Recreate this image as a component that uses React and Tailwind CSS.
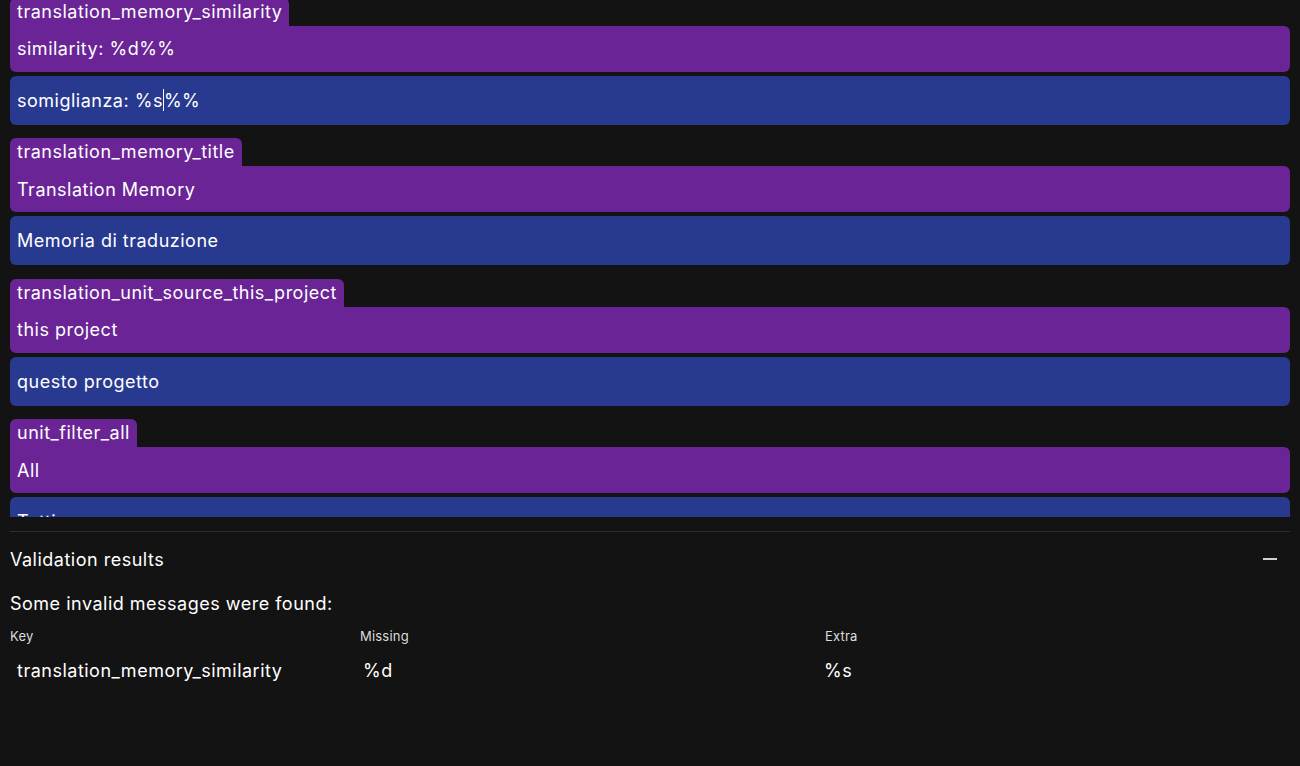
import React from "react";

const entries = [
  { key: "translation_memory_similarity", source: "similarity: %d%%", target: "somiglianza: %s", caret: "%%" },
  { key: "translation_memory_title", source: "Translation Memory", target: "Memoria di traduzione" },
  { key: "translation_unit_source_this_project", source: "this project", target: "questo progetto" },
  { key: "unit_filter_all", source: "All", target: "Tutti" },
];

const Entry = ({ item }) => (
  <div className="flex flex-col">
    <div className="self-start h-[28px] rounded-t-md bg-[#6a2496] px-[7px] leading-[28px]">
      {item.key}
    </div>
    <div className="h-[46px] rounded-b-md rounded-tr-md bg-[#6a2496] px-[7px] flex items-center">
      {item.source}
    </div>
    <div className="mt-[4px] h-[49px] rounded-md bg-[#283a8f] px-[7px] flex items-center">
      {item.target}
      {item.caret && (
        <>
          <span className="inline-block w-[1px] h-[22px] bg-white" />
          {item.caret}
        </>
      )}
    </div>
  </div>
);

const App = () => {
  return (
    <div className="h-[766px] bg-[#131313] text-white text-[18px] tracking-[0.5px] font-['Inter',sans-serif] flex flex-col overflow-hidden">
      <div className="h-[517px] shrink-0 overflow-hidden px-[10px]">
        <div className="-mt-[2.5px] flex flex-col gap-[13.5px]">
          {entries.map((item) => (
            <Entry key={item.key} item={item} />
          ))}
        </div>
      </div>

      <div className="mx-[10px] mt-[14px] border-t border-[#2e2e2e]">
        <div className="h-[54px] flex items-center justify-between">
          <span>Validation results</span>
          <span className="mr-[13px] w-[14px] h-[2px] bg-[#d0d0d0]" />
        </div>
        <div className="mt-[6px] leading-[24px]">
          Some invalid messages were found:
        </div>
        <div className="mt-[10px] grid grid-cols-[350px_465px_1fr] text-[13px] leading-[20px] text-[#dcdcdc] tracking-[0.2px]">
          <span>Key</span>
          <span>Missing</span>
          <span>Extra</span>
        </div>
        <div className="mt-[13px] grid grid-cols-[350px_465px_1fr] leading-[24px]">
          <span className="pl-[7px]">translation_memory_similarity</span>
          <span className="pl-[3px]">%d</span>
          <span className="-ml-[1px]">%s</span>
        </div>
      </div>
    </div>
  );
};

export default App;
